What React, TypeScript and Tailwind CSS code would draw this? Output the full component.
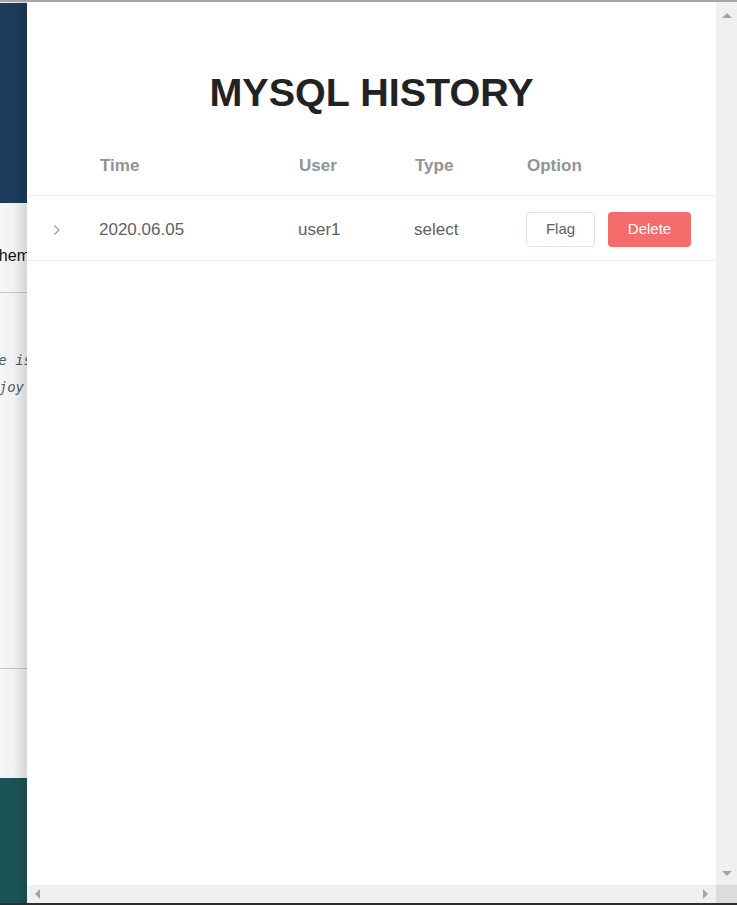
const sans = "font-['Liberation_Sans',Arial,sans-serif]";

function Triangle({ dir }: { dir: "up" | "down" | "left" | "right" }) {
  const pts = {
    up: "0,5 5,0 10,5",
    down: "0,0 10,0 5,5",
    left: "5,0 5,10 0,5",
    right: "0,0 0,10 5,5",
  }[dir];
  const vertical = dir === "up" || dir === "down";
  return (
    <svg width={vertical ? 10 : 5} height={vertical ? 5 : 10} viewBox={vertical ? "0 0 10 5" : "0 0 5 10"}>
      <polygon points={pts} fill="#a3a3a3" />
    </svg>
  );
}

function LeftStrip() {
  return (
    <div className="relative flex w-[27px] shrink-0 flex-col overflow-hidden">
      <div className="h-[1px] bg-[#f2f2f2]" />
      <div className="h-[200px] bg-[#1d3c5c]" />
      <div className="h-[90px] border-b border-[#c9c9c9] bg-[#f6f6f6] pt-[43px] text-[16px] leading-[20px] text-[#111]">
        <div className={`${sans} mr-[-3px] flex justify-end whitespace-nowrap`}>them</div>
      </div>
      <div className="flex h-[375px] flex-col bg-[#f6f6f6] pt-[54px] font-['DejaVu_Sans_Mono',monospace] text-[14px] italic leading-[27px] text-[#4e5d6c]">
        <div className="mr-[-5px] flex justify-end whitespace-nowrap">here is</div>
        <div className="mr-[3px] flex justify-end whitespace-nowrap">enjoy</div>
      </div>
      <div className="h-[110px] border-t border-[#c6c6c6] bg-[#f6f6f6]" />
      <div className="flex-1 bg-[#1b5557]" />
      <div className="pointer-events-none absolute inset-0 bg-gradient-to-r from-transparent via-black/[0.02] to-black/[0.13]" />
    </div>
  );
}

function Chevron() {
  return (
    <svg width="8" height="12" viewBox="0 0 8 12" fill="none">
      <path d="M1.5 1.5 L6 6 L1.5 10.5" stroke="#909399" strokeWidth="1.1" />
    </svg>
  );
}

function HistoryTable() {
  return (
    <div className={`${sans} mt-[20px] text-[17px]`}>
      <div className="flex h-[61px] items-center border-b border-[#ebeef5] pt-[2px] font-bold text-[#909399]">
        <div className="w-[73px] shrink-0" />
        <div className="w-[199px] shrink-0">Time</div>
        <div className="w-[116px] shrink-0">User</div>
        <div className="w-[112px] shrink-0">Type</div>
        <div className="flex-1">Option</div>
      </div>
      <div className="flex h-[65px] items-center border-b border-[#ebeef5] text-[#606266]">
        <div className="w-[72px] shrink-0 pl-[26px] pt-[4px]">
          <Chevron />
        </div>
        <div className="w-[199px] shrink-0 pt-[4px]">2020.06.05</div>
        <div className="w-[116px] shrink-0 pt-[4px]">user1</div>
        <div className="w-[112px] shrink-0 pt-[4px]">select</div>
        <div className="flex flex-1 items-center gap-[13px] pt-[2px]">
          <button className="h-[35px] w-[69px] rounded-[4px] border border-[#dcdfe6] bg-white text-[15px] text-[#606266]">
            Flag
          </button>
          <button className="h-[35px] w-[83px] rounded-[4px] bg-[#f56c6c] text-[15px] text-white">
            Delete
          </button>
        </div>
      </div>
    </div>
  );
}

export default function App() {
  return (
    <div className="flex h-[905px] w-[737px] flex-col overflow-hidden bg-white">
      <div className="h-[2px] shrink-0 bg-[#a6a6a6]" />
      <div className="flex min-h-0 flex-1">
        <LeftStrip />
        <div className="flex flex-1 flex-col">
          <div className="flex min-h-0 flex-1">
            <div className="flex-1 bg-white pt-[68px]">
              <h1 className={`${sans} text-center text-[39.5px] font-bold leading-[45px] text-[#222]`}>
                MYSQL HISTORY
              </h1>
              <HistoryTable />
            </div>
            <div className="flex w-[21px] flex-col items-center justify-between bg-[#f0f0f0] pt-[11px] pb-[9px]">
              <Triangle dir="up" />
              <Triangle dir="down" />
            </div>
          </div>
          <div className="flex h-[18px] shrink-0">
            <div className="flex flex-1 items-center justify-between bg-[#f0f0f0] pl-[8px] pr-[8px]">
              <Triangle dir="left" />
              <Triangle dir="right" />
            </div>
            <div className="w-[21px] bg-[#dcdcdc]" />
          </div>
        </div>
      </div>
      <div className="h-[2px] shrink-0 bg-[#2e2e2e]" />
    </div>
  );
}
